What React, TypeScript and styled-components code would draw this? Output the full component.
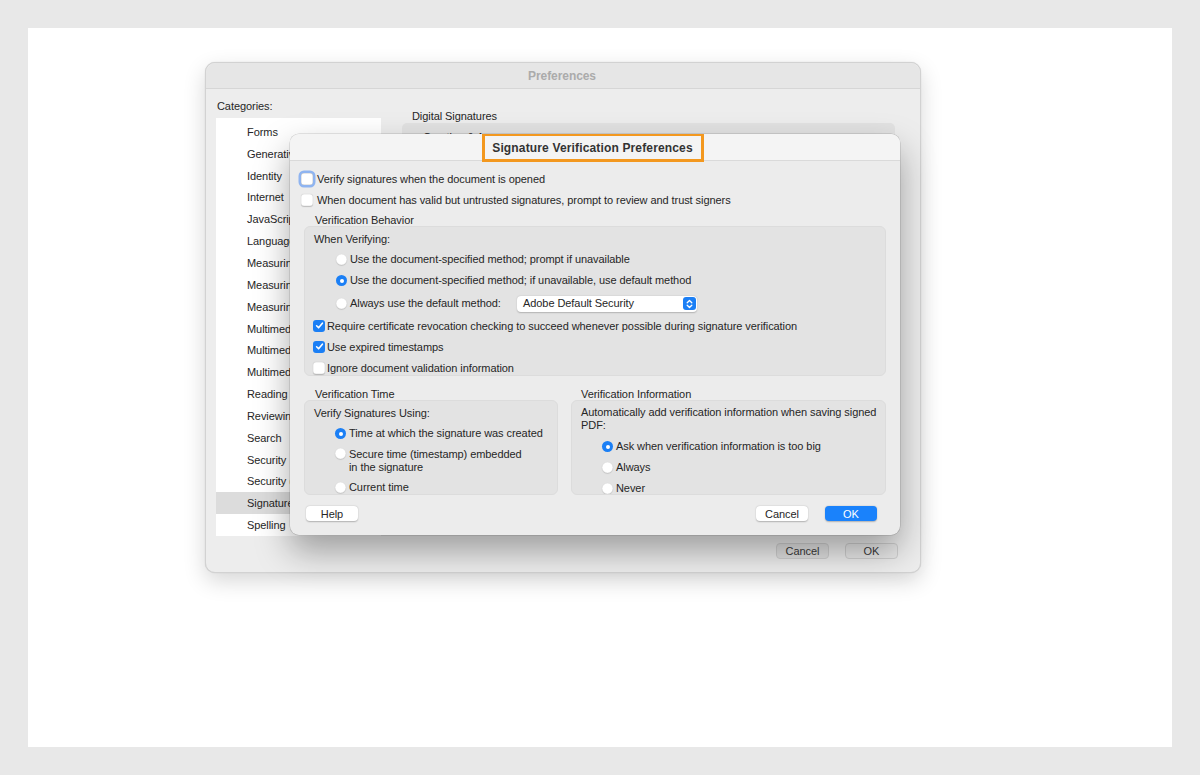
import React from "react";
import styled, { createGlobalStyle } from "styled-components";

const GlobalStyle = createGlobalStyle`
  html, body {
    margin: 0;
    padding: 0;
    background: #e8e8e8;
    font-family: "Liberation Sans", Arial, sans-serif;
    color: #262626;
    letter-spacing: -0.07px;
  }
  * { box-sizing: border-box; }
`;

const categories = [
  "Forms",
  "Generative AI",
  "Identity",
  "Internet",
  "JavaScript",
  "Language",
  "Measuring (2D)",
  "Measuring (3D)",
  "Measuring (Geo)",
  "Multimedia (legacy)",
  "Multimedia & 3D",
  "Multimedia Trust (legacy)",
  "Reading",
  "Reviewing",
  "Search",
  "Security",
  "Security (Enhanced)",
  "Signatures",
  "Spelling",
];

export default function App() {
  return (
    <>
      <GlobalStyle />
      <Page>
        <Canvas>
          <PrefWindow>
            <WinTitle>Preferences</WinTitle>
            <WinBody>
              <SideCol>
                <SideLabel>Categories:</SideLabel>
                <CatList>
                  {categories.map((c) => (
                    <CatItem key={c} $active={c === "Signatures"}>
                      {c}
                    </CatItem>
                  ))}
                </CatList>
              </SideCol>
              <MainCol>
                <MainLabel>Digital Signatures</MainLabel>
                <MainBox>
                  <BoxHead>Creation &amp; Appearance</BoxHead>
                </MainBox>
              </MainCol>
            </WinBody>
            <WinFooter>
              <GhostButton>Cancel</GhostButton>
              <GhostButton $light>OK</GhostButton>
            </WinFooter>

            <Sheet>
              <SheetTitleBar>
                <TitleHighlight>Signature Verification Preferences</TitleHighlight>
              </SheetTitleBar>
              <SheetBody>
                <TopRow>
                  <CheckBox $focus />
                  <span>Verify signatures when the document is opened</span>
                </TopRow>
                <TopRow>
                  <CheckBox />
                  <span>
                    When document has valid but untrusted signatures, prompt to
                    review and trust signers
                  </span>
                </TopRow>

                <GroupLabel>Verification Behavior</GroupLabel>
                <GroupBox>
                  <GroupHead>When Verifying:</GroupHead>
                  <RadioRow $indent={22}>
                    <Radio />
                    <span>Use the document-specified method; prompt if unavailable</span>
                  </RadioRow>
                  <RadioRow $indent={22}>
                    <Radio $on />
                    <span>
                      Use the document-specified method; if unavailable, use
                      default method
                    </span>
                  </RadioRow>
                  <RadioRow $indent={22} $tall>
                    <Radio />
                    <MethodText>Always use the default method:</MethodText>
                    <Select>
                      <span>Adobe Default Security</span>
                      <Stepper>
                        <svg width="7" height="10" viewBox="0 0 7 10">
                          <path
                            d="M1.2 3.8 L3.5 1.5 L5.8 3.8 M1.2 6.2 L3.5 8.5 L5.8 6.2"
                            fill="none"
                            stroke="#fff"
                            strokeWidth="1.3"
                            strokeLinecap="round"
                            strokeLinejoin="round"
                          />
                        </svg>
                      </Stepper>
                    </Select>
                  </RadioRow>
                  <CheckRow>
                    <CheckBox $on />
                    <span>
                      Require certificate revocation checking to succeed
                      whenever possible during signature verification
                    </span>
                  </CheckRow>
                  <CheckRow>
                    <CheckBox $on />
                    <span>Use expired timestamps</span>
                  </CheckRow>
                  <CheckRow>
                    <CheckBox />
                    <span>Ignore document validation information</span>
                  </CheckRow>
                </GroupBox>

                <SplitRow>
                  <SplitCol $w={254}>
                    <GroupLabel>Verification Time</GroupLabel>
                    <SmallBox>
                      <GroupHead $h={21}>Verify Signatures Using:</GroupHead>
                      <RadioRow $indent={21}>
                        <Radio $on />
                        <span>Time at which the signature was created</span>
                      </RadioRow>
                      <RadioRow $indent={21} $multi>
                        <Radio />
                        <span>
                          Secure time (timestamp) embedded
                          <br />
                          in the signature
                        </span>
                      </RadioRow>
                      <RadioRow $indent={21}>
                        <Radio />
                        <span>Current time</span>
                      </RadioRow>
                    </SmallBox>
                  </SplitCol>
                  <SplitCol $w={315}>
                    <GroupLabel $tight>Verification Information</GroupLabel>
                    <SmallBox>
                      <WrapHead>
                        Automatically add verification information when saving
                        signed PDF:
                      </WrapHead>
                      <RadioRow $indent={21}>
                        <Radio $on />
                        <span>Ask when verification information is too big</span>
                      </RadioRow>
                      <RadioRow $indent={21}>
                        <Radio />
                        <span>Always</span>
                      </RadioRow>
                      <RadioRow $indent={21}>
                        <Radio />
                        <span>Never</span>
                      </RadioRow>
                    </SmallBox>
                  </SplitCol>
                </SplitRow>

                <SheetFooter>
                  <PushButton>Help</PushButton>
                  <FooterRight>
                    <PushButton>Cancel</PushButton>
                    <PushButton $primary>OK</PushButton>
                  </FooterRight>
                </SheetFooter>
              </SheetBody>
            </Sheet>
          </PrefWindow>
        </Canvas>
      </Page>
    </>
  );
}

function CheckBox({ $on, $focus }: { $on?: boolean; $focus?: boolean }) {
  return (
    <CheckWrap $on={$on} $focus={$focus}>
      {$on && (
        <svg width="9" height="9" viewBox="0 0 9 9">
          <path
            d="M1.6 4.8 L3.6 6.8 L7.4 2.2"
            fill="none"
            stroke="#fff"
            strokeWidth="1.6"
            strokeLinecap="round"
            strokeLinejoin="round"
          />
        </svg>
      )}
    </CheckWrap>
  );
}

const Page = styled.div`
  width: 1200px;
  height: 775px;
  padding: 28px;
`;

const Canvas = styled.div`
  width: 1144px;
  height: 719px;
  background: #ffffff;
  padding: 34px 0 0 177px;
`;

const PrefWindow = styled.div`
  position: relative;
  width: 716px;
  height: 511px;
  background: #ededed;
  border-radius: 10px;
  border: 1px solid #d2d2d2;
  box-shadow: 0 8px 22px rgba(0, 0, 0, 0.16), 0 0 1px rgba(0, 0, 0, 0.2);
  display: flex;
  flex-direction: column;
`;

const WinTitle = styled.div`
  height: 26px;
  flex: none;
  display: flex;
  align-items: center;
  justify-content: center;
  background: #e6e6e6;
  border-bottom: 1px solid #d6d6d6;
  border-radius: 10px 10px 0 0;
  font-size: 12px;
  font-weight: 700;
  color: #ababab;
  padding-right: 2px;
`;

const WinBody = styled.div`
  flex: 1;
  display: flex;
  padding: 0 0 0 10px;
`;

const SideCol = styled.div`
  width: 165px;
  display: flex;
  flex-direction: column;
`;

const SideLabel = styled.div`
  height: 29px;
  padding: 11px 0 0 1px;
  font-size: 11px;
`;

const CatList = styled.div`
  height: 418px;
  background: #ffffff;
  padding-top: 3px;
  overflow: hidden;
`;

const CatItem = styled.div<{ $active?: boolean }>`
  height: 21.85px;
  display: flex;
  align-items: center;
  padding-left: 31px;
  font-size: 11px;
  white-space: nowrap;
  background: ${(p) => (p.$active ? "#dcdcdc" : "transparent")};
`;

const MainCol = styled.div`
  margin-left: 21px;
  width: 493px;
  display: flex;
  flex-direction: column;
`;

const MainLabel = styled.div`
  height: 34px;
  padding: 21px 0 0 10px;
  font-size: 11px;
`;

const MainBox = styled.div`
  height: 400px;
  background: #e2e2e2;
  border-radius: 5px;
  padding: 8px 0 0 21px;
`;

const BoxHead = styled.div`
  font-size: 11px;
`;

const WinFooter = styled.div`
  height: 38px;
  display: flex;
  justify-content: flex-end;
  gap: 16px;
  padding: 7px 22px 0 0;
`;

const GhostButton = styled.div<{ $light?: boolean }>`
  width: 53px;
  height: 16px;
  border-radius: 4px;
  background: ${(p) => (p.$light ? "#e9e9e9" : "#e1e1e1")};
  border: 1px solid #d0d0d0;
  font-size: 11px;
  display: flex;
  align-items: center;
  justify-content: center;
  color: #3a3a3a;
`;

const Sheet = styled.div`
  position: absolute;
  left: 84px;
  top: 71px;
  width: 610px;
  height: 401px;
  background: #ececec;
  border-radius: 9px;
  box-shadow: 0 16px 34px rgba(0, 0, 0, 0.34), 0 0 0 0.5px rgba(0, 0, 0, 0.18);
  display: flex;
  flex-direction: column;
  overflow: hidden;
`;

const SheetTitleBar = styled.div`
  height: 27px;
  flex: none;
  background: #f4f4f4;
  border-bottom: 1px solid #dadada;
  display: flex;
  justify-content: center;
`;

const TitleHighlight = styled.div`
  width: 222px;
  height: 28px;
  margin: 0 5px 0 0;
  border: 3px solid #f3981f;
  border-top-width: 2px;
  display: flex;
  align-items: center;
  justify-content: center;
  font-size: 12px;
  font-weight: 700;
  letter-spacing: 0.15px;
  color: #333333;
  position: relative;
  z-index: 1;
`;

const SheetBody = styled.div`
  flex: 1;
  display: flex;
  flex-direction: column;
  padding: 7px 14px 0 14px;
  font-size: 11px;
`;

const TopRow = styled.div`
  height: 21px;
  display: flex;
  align-items: center;
  gap: 4px;
  margin-left: -3px;
`;

const GroupLabel = styled.div<{ $tight?: boolean }>`
  height: 16px;
  display: flex;
  align-items: center;
  padding-top: 3px;
  padding-left: ${(p) => (p.$tight ? 10 : 11)}px;
`;

const GroupBox = styled.div`
  height: 150px;
  background: #e3e3e3;
  border: 1px solid #dcdcdc;
  border-radius: 6px;
  padding: 2px 0 0 9px;
`;

const GroupHead = styled.div<{ $h?: number }>`
  height: ${(p) => p.$h ?? 20}px;
  display: flex;
  align-items: center;
`;

const WrapHead = styled.div`
  line-height: 13px;
  padding: 4px 0 0 0;
  height: 34px;
`;

const RadioRow = styled.div<{ $indent: number; $tall?: boolean; $multi?: boolean }>`
  height: ${(p) => (p.$multi ? 33 : p.$tall ? 24 : 21)}px;
  display: flex;
  align-items: ${(p) => (p.$multi ? "flex-start" : "center")};
  padding-left: ${(p) => p.$indent}px;
  padding-top: ${(p) => (p.$multi ? 4 : p.$tall ? 1 : 0)}px;
  gap: 3px;
  line-height: 13px;
`;

const Radio = styled.div<{ $on?: boolean }>`
  width: 11px;
  height: 11px;
  flex: none;
  border-radius: 50%;
  background: ${(p) => (p.$on ? "#1b7ff5" : "#ffffff")};
  box-shadow: ${(p) =>
    p.$on
      ? "none"
      : "0 0.5px 1px rgba(0,0,0,0.22), inset 0 0 0 0.5px rgba(0,0,0,0.08)"};
  position: relative;
  &::after {
    content: "";
    display: ${(p) => (p.$on ? "block" : "none")};
    position: absolute;
    left: 3.5px;
    top: 3.5px;
    width: 4px;
    height: 4px;
    border-radius: 50%;
    background: #fff;
  }
`;

const MethodText = styled.span`
  width: 164px;
`;

const Select = styled.div`
  width: 180px;
  height: 16px;
  background: #ffffff;
  border-radius: 4px;
  box-shadow: 0 0.5px 1.5px rgba(0, 0, 0, 0.22);
  display: flex;
  align-items: center;
  justify-content: space-between;
  padding: 0 1.5px 0 6px;
`;

const Stepper = styled.div`
  width: 13px;
  height: 13px;
  border-radius: 3px;
  background: #1b7ff5;
  display: flex;
  align-items: center;
  justify-content: center;
`;

const CheckRow = styled.div`
  height: 21px;
  display: flex;
  align-items: center;
  gap: 2px;
  margin-left: -1px;
`;

const CheckWrap = styled.div<{ $on?: boolean; $focus?: boolean }>`
  width: 12px;
  height: 12px;
  flex: none;
  border-radius: 3px;
  display: flex;
  align-items: center;
  justify-content: center;
  background: ${(p) => (p.$on ? "#1b7ff5" : "#ffffff")};
  box-shadow: ${(p) =>
    p.$focus
      ? "0 0 0 2.5px #8fb4f0, inset 0 0 0 0.5px rgba(0,0,0,0.2)"
      : p.$on
      ? "none"
      : "0 0.5px 1px rgba(0,0,0,0.2), inset 0 0 0 0.5px rgba(0,0,0,0.1)"};
`;

const SplitRow = styled.div`
  display: flex;
  gap: 13px;
  margin-top: 8px;
`;

const SplitCol = styled.div<{ $w: number }>`
  width: ${(p) => p.$w}px;
  display: flex;
  flex-direction: column;
`;

const SmallBox = styled.div`
  height: 95px;
  background: #e3e3e3;
  border: 1px solid #dcdcdc;
  border-radius: 6px;
  padding: 1px 0 0 9px;
  overflow: hidden;
`;

const SheetFooter = styled.div`
  display: flex;
  justify-content: space-between;
  padding: 11px 9px 0 2px;
`;

const FooterRight = styled.div`
  display: flex;
  gap: 17px;
`;

const PushButton = styled.div<{ $primary?: boolean }>`
  width: 52px;
  height: 15px;
  border-radius: 4px;
  display: flex;
  align-items: center;
  justify-content: center;
  font-size: 11px;
  background: ${(p) => (p.$primary ? "#1a82fb" : "#ffffff")};
  color: ${(p) => (p.$primary ? "#ffffff" : "#262626")};
  box-shadow: 0 0.5px 1.5px rgba(0, 0, 0, 0.25);
`;
